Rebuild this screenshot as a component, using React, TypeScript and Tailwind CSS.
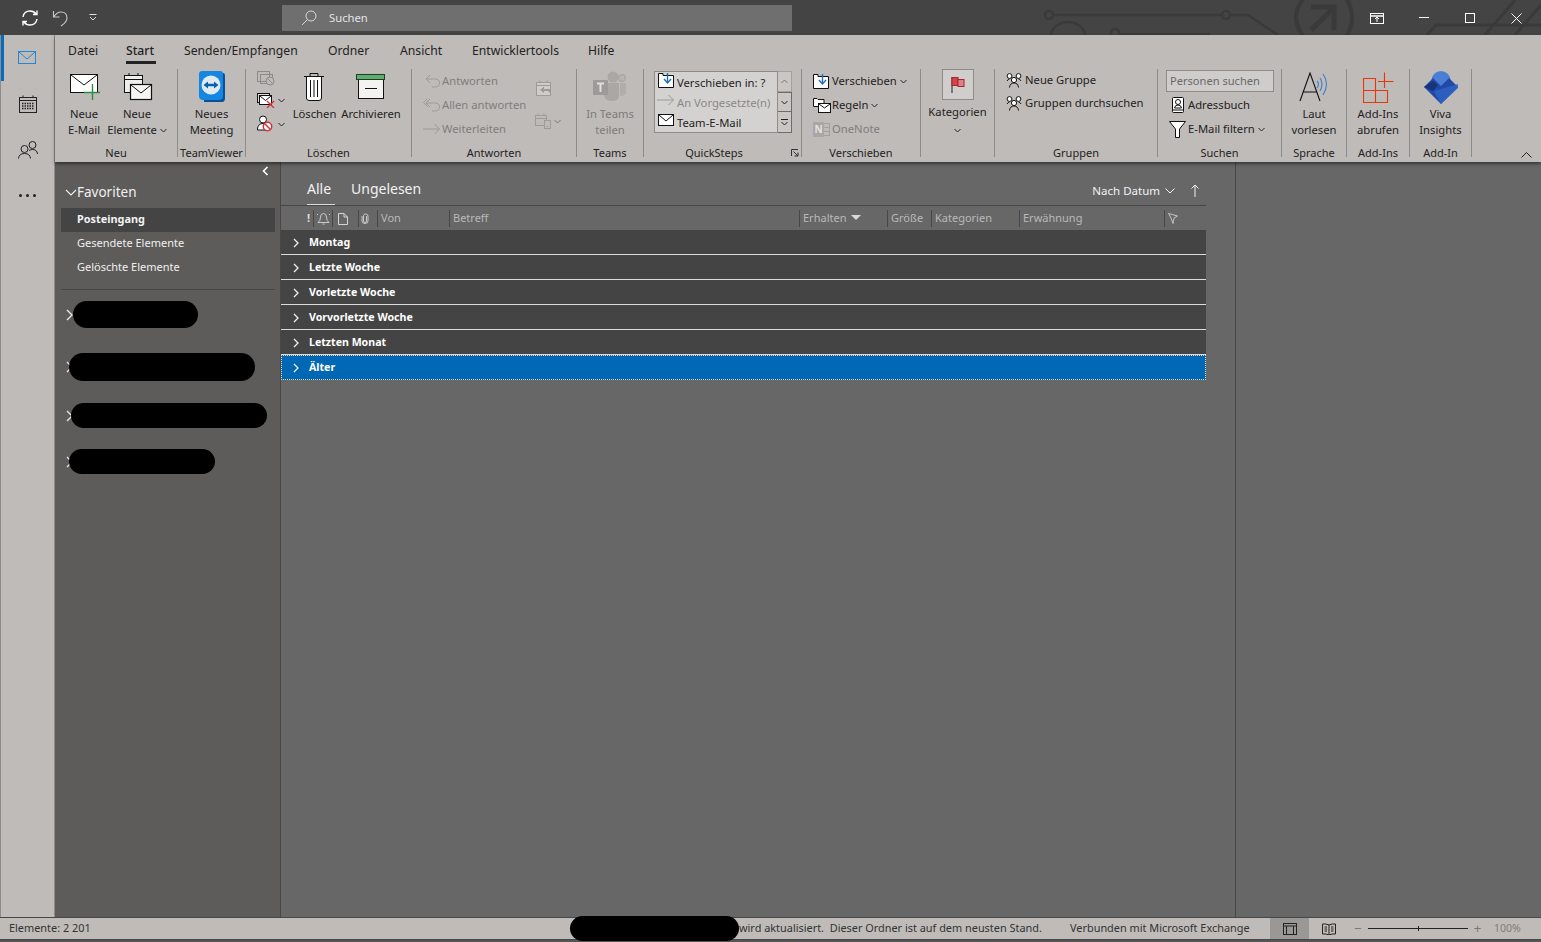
import React from 'react';

const dim = '#8c8a88';

const Chev = ({ c = '#222' }: { c?: string }) => (
  <svg width="7" height="5" viewBox="0 0 7 5" className="inline-block ml-[3px] align-middle">
    <path d="M0.5 1 L3.5 4 L6.5 1" fill="none" stroke={c} strokeWidth="1" />
  </svg>
);

const MailIcon = () => (
  <svg width="34" height="30" viewBox="0 0 34 30" className="ml-[4px]">
    <rect x="1.5" y="2.5" width="27" height="18" fill="#fff" stroke="#111" />
    <path d="M2 3 L15 13 L28 3" fill="none" stroke="#111" />
    <path d="M23.5 12 V28 M15 20.5 H31" stroke="#2e8b47" strokeWidth="1.4" fill="none" />
  </svg>
);
const NewItemsIcon = () => (
  <svg width="32" height="30" viewBox="0 0 32 30" className="ml-[4px]">
    <rect x="1.5" y="3.5" width="18" height="17" fill="#f0eeec" stroke="#111" />
    <path d="M1.5 7.5 H19.5 M6 1 V4 M15 1 V4" stroke="#111" fill="none" />
    <rect x="7.5" y="12.5" width="21" height="15" fill="#f6f5f3" stroke="#111" strokeWidth="1.2" />
    <path d="M8 13 L18 21 L28 13" fill="none" stroke="#111" />
  </svg>
);
const TeamViewerIcon = () => (
  <svg width="28" height="32" viewBox="0 0 28 32">
    <path d="M6 2 H25 Q27 2 27 5 V27 Q27 31 24 31 H6 Z" fill="#0b4f96" />
    <path d="M4 0 H22 Q25 0 25 3 V25 Q25 29 21 29 H5 Q1 29 1 25 V3 Q1 0 4 0 Z" fill="#1587e0" />
    <circle cx="13" cy="14" r="9.5" fill="#dfeaf4" />
    <path d="M5.5 14 L10 10.5 V12.7 H16 V10.5 L20.5 14 L16 17.5 V15.3 H10 V17.5 Z" fill="#0a62ad" />
  </svg>
);
const TrashIcon = () => (
  <svg width="22" height="30" viewBox="0 0 22 30" className="mr-[2px]">
    <path d="M1 4.5 H21 M7 4 V1.5 H15 V4" fill="none" stroke="#111" />
    <path d="M3.5 5 V26 Q3.5 28.5 6 28.5 H16 Q18.5 28.5 18.5 26 V5" fill="#fff" stroke="#111" />
    <path d="M7.5 8 V25 M11 8 V25 M14.5 8 V25" stroke="#111" />
  </svg>
);
const ArchiveIcon = () => (
  <svg width="30" height="26" viewBox="0 0 30 26">
    <rect x="2.5" y="5.5" width="25" height="19" fill="#f4f3f1" stroke="#111" />
    <rect x="0.5" y="0.5" width="28" height="5" fill="#5fae6f" stroke="#1d3d26" />
    <path d="M9 14.5 H21" stroke="#111" />
  </svg>
);
const CleanIcon = () => (
  <svg width="18" height="15" viewBox="0 0 18 15" fill="none" stroke={dim}>
    <rect x="0.5" y="0.5" width="12" height="10" />
    <rect x="3.5" y="3.5" width="12" height="9" />
    <circle cx="13" cy="10" r="4" fill="#bfbbb8" />
    <path d="M10.5 7.5 L15.5 12.5" />
  </svg>
);
const CleanUpIcon = () => (
  <svg width="18" height="15" viewBox="0 0 18 15">
    <rect x="0.5" y="0.5" width="12" height="9" fill="#ddd" stroke="#111" />
    <rect x="2.5" y="2.5" width="12" height="9" fill="#fff" stroke="#111" />
    <path d="M3 3 L8.5 7.5 L14 3" fill="none" stroke="#111" />
    <path d="M10 8 L17 15 M17 8 L10 15" stroke="#d13438" strokeWidth="1.3" />
  </svg>
);
const BlockIcon = () => (
  <svg width="16" height="17" viewBox="0 0 16 17">
    <circle cx="6" cy="4.5" r="3.5" fill="#fff" stroke="#111" />
    <path d="M0.5 14 Q1 8.5 6 8.5 Q10 8.5 11 12 V15 H0.5 Z" fill="#fff" stroke="#111" />
    <circle cx="10.5" cy="11.5" r="4.2" fill="#fff" stroke="#d13438" strokeWidth="1.5" />
    <path d="M7.8 8.8 L13.2 14.2" stroke="#d13438" strokeWidth="1.5" />
  </svg>
);
const ReplyIcon = ({ all }: { all?: boolean }) => (
  <svg width="18" height="14" viewBox="0 0 18 14" fill="none" stroke="#9d9a98">
    {all && <path d="M4.5 0.5 L0.5 4.5 L4.5 8.5" />}
    <path d="M7 1 L3 5 L7 9 M3 5 H12 Q16.5 5 16.5 9 Q16.5 13 12 13 H9" />
  </svg>
);
const ForwardIcon = ({ c = '#9d9a98' }: { c?: string }) => (
  <svg width="18" height="12" viewBox="0 0 18 12" fill="none" stroke={c}>
    <path d="M0 6 H16.5 M11.5 1 L16.5 6 L11.5 11" />
  </svg>
);
const MeetingReply = () => (
  <svg width="18" height="17" viewBox="0 0 18 17">
    <rect x="1.5" y="2.5" width="14" height="13" fill="#cfccc9" stroke="#9d9a98" />
    <path d="M1.5 5.5 H15.5 M5 0.5 V3 M12 0.5 V3" stroke="#9d9a98" fill="none" />
    <path d="M9 6.5 L5 10 L9 13 V11 H13 L16 14 V9 H9 Z" fill="#9d9a98" />
  </svg>
);
const MeetingIm = () => (
  <svg width="16" height="16" viewBox="0 0 16 16" fill="none" stroke="#9d9a98">
    <rect x="0.5" y="2.5" width="11" height="10" />
    <path d="M0.5 5.5 H11.5 M3 0.5 V3 M9 0.5 V3" />
    <rect x="9.5" y="7.5" width="6" height="8" fill="#bfbbb8" />
    <path d="M11.5 13.5 H13.5" />
  </svg>
);
const TeamsIcon = () => (
  <svg width="34" height="32" viewBox="0 0 34 32" fill="#aaa7a5">
    <circle cx="20" cy="6" r="5.5" />
    <circle cx="29" cy="7" r="3.5" fill="#b7b4b1" stroke="#a3a09e" />
    <path d="M11 12 H26 V24 Q26 30 19 30 Q12 30 11 24 Z" />
    <path d="M27 12 H33 V21 Q33 25 27 25 Z" fill="#b0adab" />
    <rect x="0" y="9" width="15" height="15" rx="1" fill="#9d9a98" />
    <path d="M4 12.5 H11 M7.5 12.5 V21" stroke="#e2e0de" strokeWidth="2" />
  </svg>
);
const MoveIcon = () => (
  <svg width="17" height="15" viewBox="0 0 17 15">
    <path d="M0.5 14.5 V0.5 H5 V2.5 H15.5 V14.5 Z" fill="#fff" stroke="#111" />
    <path d="M9.5 0 V9 M6 6 L9.5 10 L13 6" fill="none" stroke="#1f6fc4" strokeWidth="1.4" />
  </svg>
);
const SmallMail = () => (
  <svg width="16" height="12" viewBox="0 0 16 12">
    <rect x="0.5" y="0.5" width="15" height="11" fill="#fff" stroke="#111" />
    <path d="M1 1 L8 7 L15 1" fill="none" stroke="#111" />
  </svg>
);
const RulesIcon = () => (
  <svg width="18" height="16" viewBox="0 0 18 16">
    <path d="M0.5 9.5 V1.5 H4 L5 2.5 H11 V9.5 Z" fill="#fff" stroke="#111" />
    <rect x="5.5" y="6.5" width="12" height="9" fill="#fff" stroke="#111" />
    <path d="M6 7 L11.5 11 L17 7" fill="none" stroke="#111" />
  </svg>
);
const OneNoteIcon = () => (
  <svg width="17" height="15" viewBox="0 0 17 15">
    <rect x="9" y="1.5" width="7.5" height="12" fill="none" stroke="#a3a09e" />
    <path d="M9 5.5 H16.5 M9 9.5 H16.5" stroke="#a3a09e" />
    <rect x="0" y="0" width="11" height="15" fill="#a9a6a4" />
    <text x="5.5" y="11" fontSize="10" fontWeight="700" textAnchor="middle" fill="#e4e2e0" fontFamily="Noto Sans">N</text>
  </svg>
);
const FlagIcon = () => (
  <svg width="14" height="16" viewBox="0 0 14 16">
    <path d="M1 0 V16" stroke="#222" />
    <rect x="1" y="0.5" width="6" height="8" fill="#d3454b" stroke="#a4262c" />
    <rect x="7" y="2.5" width="6" height="7" fill="#de8286" stroke="#a4262c" />
  </svg>
);
const PeopleIcon = () => (
  <svg width="16" height="15" viewBox="0 0 16 15" fill="none" stroke="#111">
    <circle cx="3.5" cy="3" r="2.4" fill="#fff" />
    <circle cx="12.5" cy="3" r="2.4" fill="#fff" />
    <circle cx="8" cy="7" r="2.6" fill="#fff" />
    <path d="M1 8 Q2 6 3.5 6 M15 8 Q14 6 12.5 6 M3.5 14.5 Q4 10 8 10 Q12 10 12.5 14.5" />
  </svg>
);
const BookIcon = () => (
  <svg width="13" height="16" viewBox="0 0 13 16">
    <rect x="1.5" y="0.5" width="11" height="15" rx="1" fill="#fff" stroke="#111" />
    <circle cx="7" cy="5" r="2.5" fill="none" stroke="#111" />
    <path d="M3.5 11 Q4 8 7 8 Q10 8 10.5 11 Z M1.5 13 H12.5" fill="none" stroke="#111" />
  </svg>
);
const FilterIcon = () => (
  <svg width="17" height="17" viewBox="0 0 17 17">
    <path d="M0.5 0.5 H16.5 L10.5 8 V16.5 H6.5 V8 Z" fill="#fff" stroke="#111" />
  </svg>
);
const SpeakIcon = () => (
  <svg width="30" height="30" viewBox="0 0 30 30" fill="none">
    <path d="M1 29 L11 1 L21 29 M4.5 20 H17.5" stroke="#111" strokeWidth="1.1" />
    <path d="M18 9 Q21 12 18 16 M21 6 Q25 12 21 19 M24 2 Q31 12 24 23" stroke="#3f7fcc" strokeWidth="1.1" />
  </svg>
);
const AddInsIcon = () => (
  <svg width="31" height="31" viewBox="0 0 31 31" fill="none" stroke="#e2380a" strokeWidth="1.1">
    <path d="M0.5 6.5 H12.5 V30.5 H0.5 Z M0.5 18.5 H24.5 V30.5 H12.5 M21.5 0.5 V16 M15 9.5 H30.5" />
  </svg>
);
const VivaIcon = () => (
  <svg width="34" height="33" viewBox="0 0 34 33">
    <circle cx="17" cy="9.5" r="9.5" fill="#4b7fd6" />
    <path d="M0 16 L9 7 L17 15 L25 7 L34 16 L17 33 Z" fill="#1f4aa8" />
    <path d="M0 16 L9 10 L14 14 L9 20 Z" fill="#173379" />
    <path d="M10 20 L34 13 V17 L17 33 Z" fill="#2f62c4" opacity="0.85" />
  </svg>
);

const Group = ({ w, label, children, pr = '', extra }: { w: string; label: string; children?: React.ReactNode; pr?: string; extra?: React.ReactNode }) => (
  <div className={`${w} h-[88px] shrink-0 flex flex-col border-r border-[#8e8b88] relative`}>
    <div className="flex-1 min-h-0 flex">{children}</div>
    <div className={`h-[14px] text-center text-[11px] leading-[20px] text-[#222] ${pr}`}>{label}</div>
    {extra}
  </div>
);

const Big = ({ w, icon, children, cls = '' }: { w: string; icon: React.ReactNode; children: React.ReactNode; cls?: string }) => (
  <div className={`${w} ${cls} flex flex-col items-center text-center text-[11.25px] leading-[16px] text-[#222] shrink-0 whitespace-nowrap`}>
    <div className="h-[36px] flex items-center justify-center">{icon}</div>
    <div className="mt-[1px]">{children}</div>
  </div>
);

const Small = ({ icon, children, color = 'text-[#222]', gap = 'gap-[3px]' }: { icon: React.ReactNode; children: React.ReactNode; color?: string; gap?: string }) => (
  <div className={`h-[24px] flex items-center ${gap} text-[11.25px] whitespace-nowrap ${color}`}>
    {icon}
    <span>{children}</span>
  </div>
);

const Tree = ({ blob, wrap }: { blob: string; wrap: string }) => (
  <div className={`flex items-center ${wrap}`}>
    <svg width="8" height="12" viewBox="0 0 8 12" className="shrink-0">
      <path d="M1 1 L6 6 L1 11" fill="none" stroke="#e8e8e8" strokeWidth="1.4" />
    </svg>
    <div className={`${blob} rounded-full bg-black`} />
  </div>
);

const GroupRow = ({ label, active }: { label: string; active?: boolean }) => (
  <div
    className={`h-[25px] flex items-center font-bold text-[10.6px] text-white ${
      active ? 'bg-[#0067b5] border border-dotted border-[#f2d9b8] pl-[11px]' : 'bg-[#444444] border-b border-[#dcdcdc] pl-[12px] pt-[1px]'
    }`}
  >
    <svg width="7" height="10" viewBox="0 0 7 10" className="mr-[9px] shrink-0">
      <path d="M1 1 L5 5 L1 9" fill="none" stroke="#f0f0f0" strokeWidth="1.3" />
    </svg>
    {label}
  </div>
);

const Col = ({ w, children }: { w: string; children?: React.ReactNode }) => (
  <div className={`${w} h-[17px] shrink-0 border-l border-[#474747] pl-[3px] flex items-center text-[11px] text-[#b9b9b9] whitespace-nowrap`}>
    {children}
  </div>
);

function Qs({ icon, children, dim: isDim }: { icon: React.ReactNode; children: React.ReactNode; dim?: boolean }) {
  return (
    <div className={`h-[20px] flex items-center gap-[2px] pl-[2px] text-[11.25px] whitespace-nowrap ${isDim ? 'text-[#8a8886]' : 'text-[#222]'}`}>
      <span className="w-[18px] flex justify-center mt-[-4px]">{icon}</span>
      <span className="mt-[3px]">{children}</span>
    </div>
  );
}

export default function App() {
  return (
    <div className="w-[1541px] h-[942px] overflow-hidden flex flex-col bg-[#555] font-['Noto_Sans','Open_Sans',sans-serif] text-[11px]">
      {/* title bar */}
      <div className="h-[35px] shrink-0 bg-[#444444] flex items-center relative overflow-hidden">
        <svg width="521" height="35" viewBox="0 0 521 35" className="absolute left-[1020px] top-0" fill="none" stroke="#3a3a3a" strokeWidth="2.5">
          <path d="M33 15 H202 M211 15 H228 L258 35 M98 34 H190 M31 36 A17 14 0 0 1 65 36" />
          <circle cx="29" cy="15" r="4" />
          <circle cx="206" cy="15" r="4" />
          <circle cx="95" cy="33" r="4" />
          <path d="M284 -2 Q268 17 284 37 M326 -2 Q338 17 326 37" strokeWidth="4" />
          <path d="M291 7 H314 V30 M314 8 L291 30" strokeWidth="5" />
          <path d="M407 35 L416 25 H521 M465 35 L495 0 M495 35 L521 5" strokeWidth="3" />
        </svg>
        <div className="w-[282px] shrink-0 flex items-center pl-[21px] gap-[14px] relative">
          <svg width="18" height="18" viewBox="0 0 18 18" fill="none" stroke="#fff" strokeWidth="1.4">
            <path d="M2 8 Q3 2 9 2 Q13 2 15 5 M16 1.5 V5.5 H12 M16 10 Q15 16 9 16 Q5 16 3 13 M2 16.5 V12.5 H6" />
          </svg>
          <svg width="16" height="18" viewBox="0 0 16 18" fill="none" stroke="#c9c9c9" strokeWidth="1.1" className="ml-[-1px]">
            <path d="M1.5 2 V8 H7.5 M1.5 8 Q5 3 9 3 Q15 3 15 9 Q15 13 9 17" />
          </svg>
          <svg width="8" height="7" viewBox="0 0 8 7" className="ml-[7px]" stroke="#ddd" fill="none">
            <path d="M0.5 0.5 H7.5 M1 3 L4 6 L7 3" />
          </svg>
        </div>
        <div className="w-[510px] h-[26px] mt-[1px] shrink-0 bg-[#6f6f6f] flex items-center pl-[19px] gap-[12px] text-[#e4e4e4] text-[11.25px] relative">
          <svg width="16" height="16" viewBox="0 0 16 16" fill="none" stroke="#d8d8d8">
            <circle cx="10" cy="6" r="5" />
            <path d="M6.5 9.5 L1 15" />
          </svg>
          Suchen
        </div>
        <div className="flex-1" />
        <div className="flex items-center relative mt-[1px]">
          <svg width="14" height="11" viewBox="0 0 14 11" fill="none" stroke="#fff" className="mr-[35px]">
            <rect x="0.5" y="0.5" width="13" height="10" />
            <path d="M0.5 3 H13.5" strokeWidth="1.5" />
            <path d="M7 9 V4.5 M5 6 L7 4 L9 6" />
          </svg>
          <svg width="10" height="10" viewBox="0 0 10 10" stroke="#fff" className="mr-[36px] mt-[-2px]">
            <path d="M0 5.5 H10" />
          </svg>
          <svg width="10" height="10" viewBox="0 0 10 10" fill="none" stroke="#fff" className="mr-[36px]">
            <rect x="0.5" y="0.5" width="9" height="9" />
          </svg>
          <svg width="11" height="11" viewBox="0 0 11 11" stroke="#fff" className="mr-[19px]">
            <path d="M0.5 0.5 L10.5 10.5 M10.5 0.5 L0.5 10.5" />
          </svg>
        </div>
      </div>

      <div className="flex-1 min-h-0 flex">
        {/* app rail */}
        <div className="w-[55px] shrink-0 bg-[#bfbbb8] border-x border-[#8e8b88] flex flex-col items-center relative">
          <div className="absolute left-0 top-0 w-[3px] h-[46px] bg-[#0a6cc0]" />
          <div className="h-[46px] flex items-center justify-center pr-[1px] pb-[1px]">
            <svg width="18" height="13" viewBox="0 0 18 13" fill="none" stroke="#2386d6">
              <rect x="0.5" y="0.5" width="17" height="12" />
              <path d="M1 1 L9 8 L17 1" />
            </svg>
          </div>
          <div className="h-[46px] flex items-center justify-center">
            <svg width="18" height="18" viewBox="0 0 18 18" fill="none" stroke="#222">
              <rect x="0.5" y="2.5" width="17" height="15" />
              <path d="M0.5 5.5 H17.5 M4 0.5 V3 M14 0.5 V3" />
              <path d="M3 8.5 H15 M3 11 H15 M3 13.5 H15" strokeWidth="1.4" strokeDasharray="1.5 1" />
            </svg>
          </div>
          <div className="h-[46px] flex items-center justify-center">
            <svg width="20" height="18" viewBox="0 0 20 18" fill="none" stroke="#222">
              <circle cx="6.5" cy="8" r="3.5" />
              <path d="M0.5 17.5 Q1 12.5 6.5 12.5 Q12 12.5 12.5 17.5" />
              <circle cx="14.5" cy="4" r="3.5" />
              <path d="M11 9.5 Q12.5 8.5 14.5 8.5 Q19 8.5 19.5 13" />
            </svg>
          </div>
          <div className="h-[44px] flex items-center justify-center gap-[4px]">
            <div className="w-[3px] h-[3px] rounded-full bg-[#222]" />
            <div className="w-[3px] h-[3px] rounded-full bg-[#222]" />
            <div className="w-[3px] h-[3px] rounded-full bg-[#222]" />
          </div>
        </div>

        <div className="flex-1 min-w-0 flex flex-col">
          {/* ribbon */}
          <div className="h-[127px] shrink-0 bg-[#bfbbb8] relative shadow-[0_2px_3px_rgba(0,0,0,0.45)] z-10">
            <div className="h-[32px] mb-[2px] flex items-center text-[12.2px] text-[#222] pl-[13px]">
              <span className="w-[58px]">Datei</span>
              <span className="w-[58px] relative font-medium">
                Start
                <span className="absolute left-0 top-[19px] w-[30px] h-[3px] bg-[#222]" />
              </span>
              <span className="w-[144px]">Senden/Empfangen</span>
              <span className="w-[72px]">Ordner</span>
              <span className="w-[72px]">Ansicht</span>
              <span className="w-[116px]">Entwicklertools</span>
              <span>Hilfe</span>
            </div>
            <div className="flex">
              <Group w="w-[123px]" label="Neu">
                <div className="flex pl-[5px]">
                  <Big w="w-[48px]" icon={<MailIcon />}>Neue<br />E-Mail</Big>
                  <Big w="w-[60px]" cls="-ml-[1px]" icon={<NewItemsIcon />}>Neue<br />Elemente<Chev /></Big>
                </div>
              </Group>
              <Group w="w-[68px]" label="TeamViewer">
                <Big w="w-[67px]" icon={<TeamViewerIcon />}>Neues<br />Meeting</Big>
              </Group>
              <Group w="w-[166px]" label="Löschen">
                <div className="flex pl-[11px]">
                  <div className="w-[34px] flex flex-col pt-[2px] gap-[7px]">
                    <CleanIcon />
                    <div className="flex items-center"><CleanUpIcon /><Chev /></div>
                    <div className="flex items-center"><BlockIcon /><span className="ml-[2px]"><Chev /></span></div>
                  </div>
                  <Big w="w-[47px]" icon={<TrashIcon />}>Löschen</Big>
                  <Big w="w-[66px]" icon={<ArchiveIcon />}>Archivieren</Big>
                </div>
              </Group>
              <Group w="w-[165px]" label="Antworten">
                <div className="flex pl-[11px] w-full">
                  <div className="w-[112px] flex flex-col">
                    <Small color="text-[#807e7c]" gap="gap-[1px]" icon={<ReplyIcon />}>Antworten</Small>
                    <Small color="text-[#807e7c]" gap="gap-[1px]" icon={<ReplyIcon all />}>Allen antworten</Small>
                    <Small color="text-[#807e7c]" gap="gap-[1px]" icon={<ForwardIcon />}>Weiterleiten</Small>
                  </div>
                  <div className="flex flex-col gap-[16px] pt-[11px]">
                    <MeetingReply />
                    <div className="flex items-center"><MeetingIm /><Chev c="#777" /></div>
                  </div>
                </div>
              </Group>
              <Group w="w-[67px]" label="Teams">
                <Big w="w-[66px]" icon={<TeamsIcon />}><span className="text-[#7d7b79]">In Teams<br />teilen</span></Big>
              </Group>
              <Group
                w="w-[158px]"
                label="QuickSteps"
                pr="pr-[17px]"
                extra={
                  <svg width="8" height="8" viewBox="0 0 8 8" fill="none" stroke="#333" className="absolute right-[2px] bottom-[0px]">
                    <path d="M0.5 7 V0.5 H7 M2.5 2.5 L7 7 M7 3.5 V7 H3.5" />
                  </svg>
                }
              >
                <div className="flex pl-[10px] pt-[2px] h-[63px]">
                  <div className="w-[124px] h-[62px] bg-[#d4d2d0] border border-[#8e8b88] flex flex-col">
                    <Qs icon={<MoveIcon />}>Verschieben in: ?</Qs>
                    <Qs icon={<ForwardIcon />} dim>An Vorgesetzte(n)</Qs>
                    <Qs icon={<SmallMail />}>Team-E-Mail</Qs>
                  </div>
                  <div className="w-[14px] h-[62px] flex flex-col">
                    <div className="h-[21px] bg-[#c9c6c4] border-y border-r border-[#a3a09e] flex items-center justify-center">
                      <svg width="7" height="5" viewBox="0 0 7 5"><path d="M0.5 4 L3.5 1 L6.5 4" fill="none" stroke="#777" /></svg>
                    </div>
                    <div className="h-[20px] bg-[#c9c6c4] border-r border-y border-[#6e6c6a] flex items-center justify-center">
                      <svg width="7" height="5" viewBox="0 0 7 5"><path d="M0.5 1 L3.5 4 L6.5 1" fill="none" stroke="#222" /></svg>
                    </div>
                    <div className="h-[21px] bg-[#c9c6c4] border-r border-b border-[#6e6c6a] flex items-center justify-center">
                      <svg width="7" height="7" viewBox="0 0 7 7" fill="none" stroke="#222"><path d="M0 0.5 H7 M0.5 3 L3.5 6 L6.5 3" /></svg>
                    </div>
                  </div>
                </div>
              </Group>
              <Group w="w-[119px]" label="Verschieben">
                <div className="flex flex-col pl-[11px]">
                  <Small icon={<MoveIcon />} gap="gap-[2px]"><>Verschieben<Chev /></></Small>
                  <Small icon={<RulesIcon />} gap="gap-[1px]"><>Regeln<Chev /></></Small>
                  <Small icon={<OneNoteIcon />} color="text-[#807e7c]" gap="gap-[2px]">OneNote</Small>
                </div>
              </Group>
              <Group w="w-[74px]" label="">
                <div className="w-full flex flex-col items-center text-[11.25px] text-[#222]">
                  <div className="w-[32px] h-[31px] bg-[#d0cecc] border border-[#8e8b88] flex items-center justify-center"><FlagIcon /></div>
                  <div className="leading-[16px] mt-[4px]">Kategorien</div>
                  <div className="mt-[4px] mr-[3px] leading-none"><Chev /></div>
                </div>
              </Group>
              <Group w="w-[163px]" label="Gruppen">
                <div className="flex flex-col pl-[11px] mt-[-1px]">
                  <div className="h-[23px]"><Small icon={<PeopleIcon />}>Neue Gruppe</Small></div>
                  <div className="h-[23px]"><Small icon={<PeopleIcon />}>Gruppen durchsuchen</Small></div>
                </div>
              </Group>
              <Group w="w-[124px]" label="Suchen">
                <div className="flex flex-col pl-[8px]">
                  <div className="w-[108px] h-[22px] mt-[1px] bg-[#cfcdcb] border border-[#8e8b88] text-[11.1px] text-[#6a6868] pl-[3px] flex items-center">Personen suchen</div>
                  <div className="pl-[5px] mt-[1px]"><Small icon={<BookIcon />} gap="gap-[4px]">Adressbuch</Small></div>
                  <div className="pl-[3px]"><Small icon={<FilterIcon />} gap="gap-[2px]"><>E-Mail filtern<Chev /></></Small></div>
                </div>
              </Group>
              <Group w="w-[65px]" label="Sprache">
                <Big w="w-[64px]" icon={<SpeakIcon />}>Laut<br />vorlesen</Big>
              </Group>
              <Group w="w-[63px]" label="Add-Ins">
                <Big w="w-[62px]" icon={<AddInsIcon />}>Add-Ins<br />abrufen</Big>
              </Group>
              <Group w="w-[62px]" label="Add-In">
                <Big w="w-[61px]" icon={<VivaIcon />}>Viva<br />Insights</Big>
              </Group>
            </div>
            <svg width="11" height="6" viewBox="0 0 11 6" className="absolute right-[9px] bottom-[4px]">
              <path d="M0.5 5.5 L5.5 0.5 L10.5 5.5" fill="none" stroke="#222" />
            </svg>
          </div>

          {/* body */}
          <div className="flex-1 min-h-0 flex">
            <div className="w-[226px] shrink-0 bg-[#5d5c5a] border-r border-[#474747] flex flex-col">
              <div className="h-[17px] flex items-center justify-end pr-[11px]">
                <svg width="7" height="10" viewBox="0 0 7 10"><path d="M5.5 1 L1.5 5 L5.5 9" fill="none" stroke="#fff" strokeWidth="1.6" /></svg>
              </div>
              <div className="h-[29px] flex items-center pl-[10px] pb-[3px] text-[13.5px] text-[#f0f0f0]">
                <svg width="12" height="7" viewBox="0 0 12 7"><path d="M1 1 L6 6 L11 1" fill="none" stroke="#f0f0f0" strokeWidth="1.1" /></svg>
                Favoriten
              </div>
              <div className="ml-[6px] w-[214px] h-[24px] bg-[#444] flex items-center pl-[16px] pb-[1px] font-bold text-[10.9px] text-[#f2f2f2]">Posteingang</div>
              <div className="ml-[6px] w-[214px] h-[24px] flex items-center pl-[16px] pb-[1px] text-[#f0f0f0] text-[11px]">Gesendete Elemente</div>
              <div className="ml-[6px] w-[214px] h-[24px] flex items-center pl-[16px] pb-[1px] text-[#f0f0f0] text-[11px]">Gelöschte Elemente</div>
              <div className="ml-[6px] w-[214px] h-[10px] border-b border-[#474747]" />
              <div className="ml-[11px]">
                <Tree wrap="mt-[11px]" blob="w-[125px] h-[27px] -ml-[1px]" />
                <Tree wrap="mt-[25px]" blob="w-[186px] h-[28px] -ml-[5px]" />
                <Tree wrap="mt-[22px]" blob="w-[196px] h-[25px] -ml-[3px]" />
                <Tree wrap="mt-[21px]" blob="w-[146px] h-[25px] -ml-[5px]" />
              </div>
            </div>
            <div className="w-[955px] shrink-0 bg-[#676767] border-r border-[#474747] pr-[29px]">
              <div className="h-[44px] flex items-end border-b border-[#474747] pl-[26px] pr-[7px] text-[14px] text-[#f2f2f2]">
                <div className="w-[28px] h-[30px] border-b border-[#dcdcdc] pb-[3px] flex items-center">Alle</div>
                <div className="h-[30px] ml-[16px] pb-[3px] flex items-center">Ungelesen</div>
                <div className="flex-1" />
                <div className="h-[30px] flex items-center text-[11.5px] pt-[1px]">
                  Nach Datum
                  <svg width="10" height="6" viewBox="0 0 10 6" className="ml-[5px] mr-[16px]"><path d="M0.5 0.5 L5 5 L9.5 0.5" fill="none" stroke="#f2f2f2" /></svg>
                  <svg width="8" height="13" viewBox="0 0 8 13"><path d="M4 13 V1 M0.5 4.5 L4 1 L7.5 4.5" fill="none" stroke="#f2f2f2" /></svg>
                </div>
              </div>
              <div className="h-[24px] flex items-center pl-[26px] pt-[1px]">
                <div className="w-[6px] text-[11px] font-bold text-[#dedede]">!</div>
                <Col w="w-[19px]">
                  <svg width="13" height="13" viewBox="0 0 13 13" fill="none" stroke="#c9c9c9"><path d="M1 10.5 H12 Q9.5 9 9.5 5 Q9.5 1.5 6.5 1.5 Q3.5 1.5 3.5 5 Q3.5 9 1 10.5 Z M5.5 12 H7.5 M1 3 L0 2 M12 3 L13 2" /></svg>
                </Col>
                <Col w="w-[26px]">
                  <svg width="10" height="12" viewBox="0 0 10 12" fill="none" stroke="#d4d4d4" className="ml-[2px]"><path d="M0.5 0.5 H6 L9.5 4 V11.5 H0.5 Z M6 0.5 V4 H9.5" /></svg>
                </Col>
                <Col w="w-[19px]">
                  <svg width="8" height="11" viewBox="0 0 8 11" fill="none" stroke="#c9c9c9" className="-ml-[1px]"><path d="M5.5 3 V8 Q5.5 9.5 4 9.5 Q2.5 9.5 2.5 8 V2.5 Q2.5 1 4.5 1 Q7 1 7 3 V8 Q7 10.5 4 10.5 Q1 10.5 1 8 V3" /></svg>
                </Col>
                <Col w="w-[72px]">Von</Col>
                <Col w="w-[350px]">Betreff</Col>
                <Col w="w-[88px]">
                  Erhalten
                  <svg width="10" height="5" viewBox="0 0 10 5" className="ml-[5px] mb-[3px]"><path d="M0 0 H10 L5 5 Z" fill="#d8d8d8" /></svg>
                </Col>
                <Col w="w-[44px]">Größe</Col>
                <Col w="w-[88px]">Kategorien</Col>
                <Col w="w-[145px]">Erwähnung</Col>
                <Col w="w-[41px]">
                  <svg width="10" height="11" viewBox="0 0 10 11" fill="none" stroke="#c4c4c4"><path d="M0.5 0.5 L9.5 3 L6 5 L5 10.5 L3 5 Z" /></svg>
                </Col>
              </div>
              <GroupRow label="Montag" />
              <GroupRow label="Letzte Woche" />
              <GroupRow label="Vorletzte Woche" />
              <GroupRow label="Vorvorletzte Woche" />
              <GroupRow label="Letzten Monat" />
              <GroupRow label="Älter" active />
            </div>
            <div className="flex-1 bg-[#676767]" />
          </div>
        </div>
      </div>

      {/* status bar */}
      <div className="h-[23px] shrink-0 bg-[#bfbbb8] border-y border-[#474747] flex items-center text-[10.9px] text-[#333] relative z-20 mb-[2px]">
        <div className="w-[570px] shrink-0 pl-[9px]">Elemente: 2 201</div>
        <div className="w-[169px] h-[25px] shrink-0 rounded-full bg-black" />
        <div className="w-[331px] shrink-0 whitespace-nowrap">wird aktualisiert.&nbsp; Dieser Ordner ist auf dem neusten Stand.</div>
        <div className="w-[200px] shrink-0 whitespace-nowrap">Verbunden mit Microsoft Exchange</div>
        <div className="w-[39px] h-full shrink-0 bg-[#9a9896] flex items-center justify-center">
          <svg width="14" height="12" viewBox="0 0 14 12" fill="none" stroke="#222"><rect x="0.5" y="0.5" width="13" height="11" /><path d="M0.5 3 H13.5 M3.5 3 V11.5 M10.5 3 V11.5" /></svg>
        </div>
        <div className="w-[39px] h-full shrink-0 flex items-center justify-center">
          <svg width="14" height="12" viewBox="0 0 14 12" fill="none" stroke="#222"><path d="M7 2 Q4 0.5 0.5 1 V11 Q4 10.5 7 12 Q10 10.5 13.5 11 V1 Q10 0.5 7 2 Z M7 2 V12 M2.5 4 H5 M2.5 6 H5 M2.5 8 H5 M9 4 H11.5 M9 6 H11.5 M9 8 H11.5" /></svg>
        </div>
        <div className="w-[6px] shrink-0" />
        <div className="text-[#777] w-[14px] text-[13px] leading-none">−</div>
        <div className="w-[100px] h-[1px] bg-[#222] relative shrink-0">
          <div className="absolute left-[50px] top-[-2px] w-[1px] h-[5px] bg-[#222]" />
        </div>
        <div className="text-[#777] w-[19px] text-center text-[13px] leading-none">+</div>
        <div className="ml-[7px] text-[#7f7d7b] text-[10.5px]">100%</div>
      </div>
    </div>
  );
}
